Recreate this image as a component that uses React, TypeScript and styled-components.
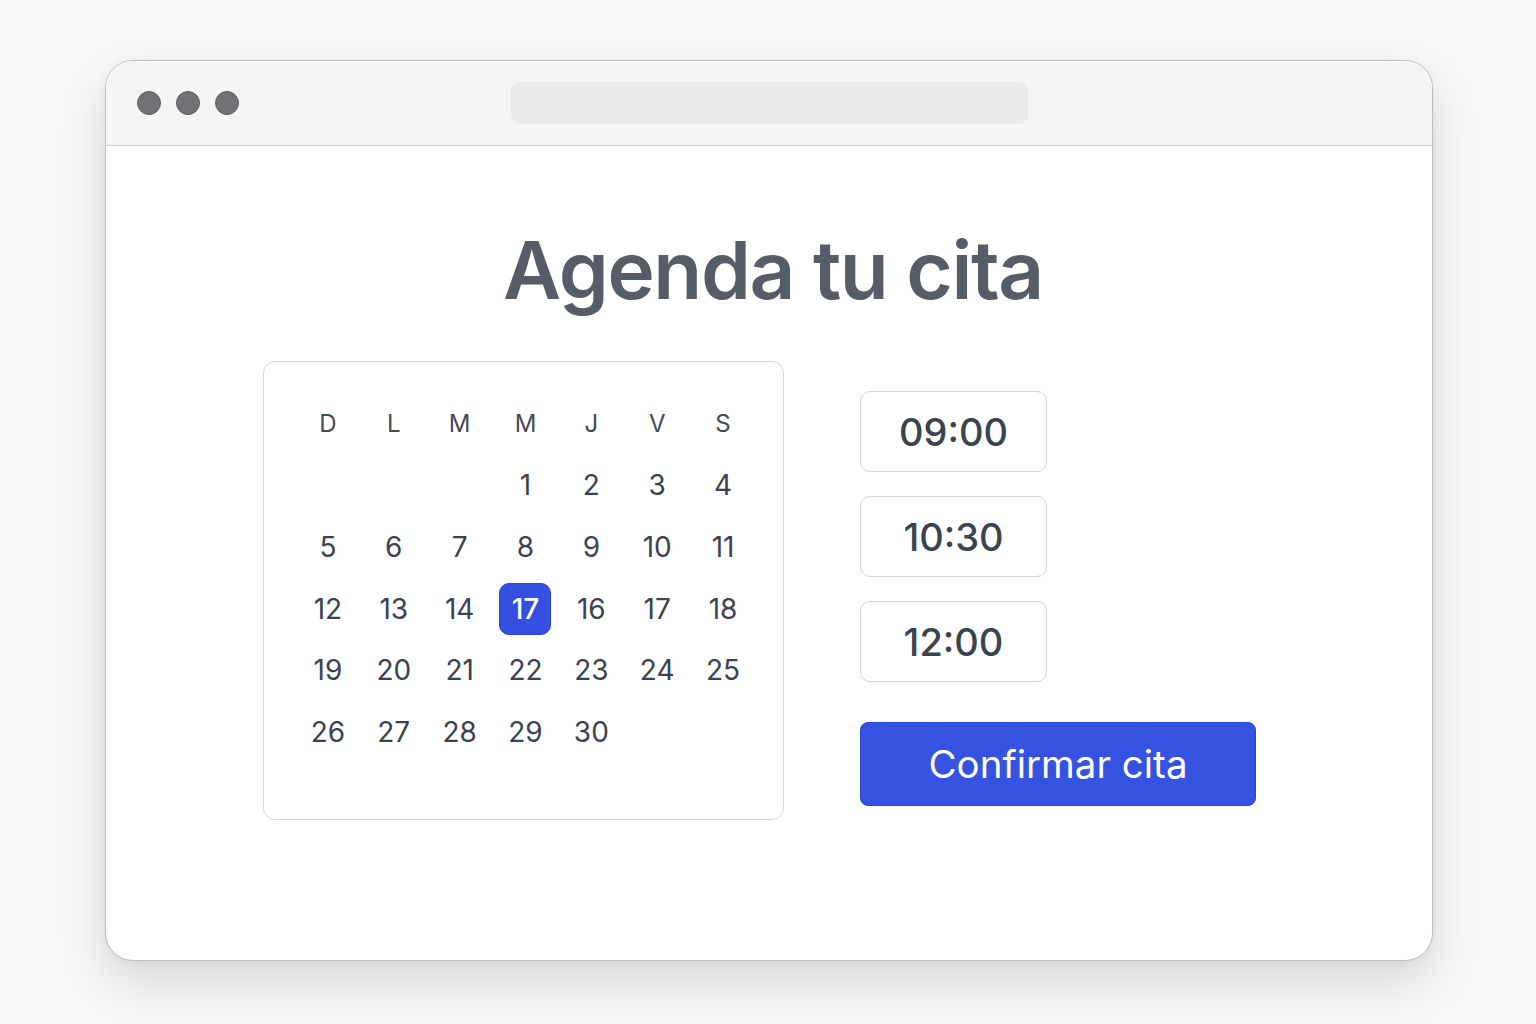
import styled, { createGlobalStyle } from "styled-components";

const GlobalStyle = createGlobalStyle`
  html, body {
    margin: 0;
    padding: 0;
    background: #f8f8f8;
    font-family: Inter, "Noto Sans", sans-serif;
  }
`;

const days = ["D", "L", "M", "M", "J", "V", "S"];
// null = empty cell before the 1st
const dates: (number | null)[] = [
  null, null, null, 1, 2, 3, 4,
  5, 6, 7, 8, 9, 10, 11,
  12, 13, 14, 17, 16, 17, 18,
  19, 20, 21, 22, 23, 24, 25,
  26, 27, 28, 29, 30,
];
const selectedIndex = 17;
const times = ["09:00", "10:30", "12:00"];

export default function App() {
  return (
    <>
      <GlobalStyle />
      <Page>
        <Window>
          <TitleBar>
            <Dots>
              <Dot />
              <Dot />
              <Dot />
            </Dots>
            <AddressBar />
            <span />
          </TitleBar>
          <Content>
            <Title>Agenda tu cita</Title>
            <Row>
              <Calendar>
                {days.map((d, i) => (
                  <DayHeader key={"h" + i}>{d}</DayHeader>
                ))}
                {dates.map((n, i) => (
                  <DateCell key={i}>
                    {n !== null && (
                      <DateNumber $selected={i === selectedIndex}>{n}</DateNumber>
                    )}
                  </DateCell>
                ))}
              </Calendar>
              <Side>
                {times.map((t) => (
                  <TimeSlot key={t}>{t}</TimeSlot>
                ))}
                <ConfirmButton>Confirmar cita</ConfirmButton>
              </Side>
            </Row>
          </Content>
        </Window>
      </Page>
    </>
  );
}

const Page = styled.div`
  min-height: 1024px;
  padding: 60px 0 0 105px;
  box-sizing: border-box;
`;

const Window = styled.div`
  width: 1328px;
  height: 901px;
  box-sizing: border-box;
  background: #ffffff;
  border: 1px solid #bdbdbd;
  border-radius: 28px;
  overflow: hidden;
  box-shadow: 0 22px 50px rgba(0, 0, 0, 0.13), 0 2px 8px rgba(0, 0, 0, 0.05);
`;

const TitleBar = styled.div`
  height: 85px;
  box-sizing: border-box;
  background: #f5f5f5;
  border-bottom: 1px solid #cfcfcf;
  display: grid;
  grid-template-columns: 1fr 517px 1fr;
  align-items: center;
`;

const Dots = styled.div`
  display: flex;
  gap: 15px;
  padding-left: 31px;
`;

const Dot = styled.span`
  width: 24px;
  height: 24px;
  box-sizing: border-box;
  border-radius: 50%;
  background: #707174;
  border: 1px solid #5c5d60;
`;

const AddressBar = styled.div`
  height: 42px;
  border-radius: 9px;
  background: #ebebeb;
`;

const Content = styled.div`
  display: flex;
  flex-direction: column;
`;

const Title = styled.h1`
  margin: 84px 0 0;
  text-align: center;
  font-size: 80px;
  line-height: 80px;
  font-weight: 600;
  letter-spacing: -1.35px;
  color: #575d66;
  padding-left: 8px;
`;

const Row = styled.div`
  display: flex;
  align-items: flex-start;
  gap: 76px;
  margin-top: 51px;
  padding-left: 157px;
`;

const Calendar = styled.div`
  width: 521px;
  box-sizing: border-box;
  border: 1px solid #d6d6d6;
  border-radius: 12px;
  padding: 31px 27px 56px 31px;
  display: grid;
  grid-template-columns: repeat(7, 1fr);
  grid-auto-rows: 61.6px;
  color: #3b4250;
`;

const DayHeader = styled.div`
  display: flex;
  align-items: center;
  justify-content: center;
  font-size: 24px;
  font-weight: 400;
  color: #454a52;
`;

const DateCell = styled.div`
  display: flex;
  align-items: center;
  justify-content: center;
`;

const DateNumber = styled.span<{ $selected: boolean }>`
  width: 52px;
  height: 52px;
  box-sizing: border-box;
  display: flex;
  align-items: center;
  justify-content: center;
  font-size: 28px;
  border-radius: 10px;
  background: ${({ $selected }) => ($selected ? "#3550e0" : "transparent")};
  border: 1px solid ${({ $selected }) => ($selected ? "#2a45d6" : "transparent")};
  color: ${({ $selected }) => ($selected ? "#ffffff" : "#3b4250")};
  font-weight: ${({ $selected }) => ($selected ? 500 : 400)};
`;

const Side = styled.div`
  display: flex;
  flex-direction: column;
  align-items: flex-start;
  gap: 24px;
  margin-top: 30px;
`;

const TimeSlot = styled.div`
  width: 187px;
  height: 81px;
  box-sizing: border-box;
  border: 1px solid #d4d4d4;
  border-radius: 10px;
  display: flex;
  align-items: center;
  justify-content: center;
  font-size: 38px;
  font-weight: 500;
  color: #3a4350;
`;

const ConfirmButton = styled.button`
  margin-top: 16px;
  width: 396px;
  height: 84px;
  box-sizing: border-box;
  border: 1px solid #2a44d8;
  border-radius: 8px;
  background: #3652e0;
  color: #ffffff;
  font-family: Inter, "Noto Sans", sans-serif;
  font-size: 38.5px;
  font-weight: 400;
  cursor: pointer;
`;
